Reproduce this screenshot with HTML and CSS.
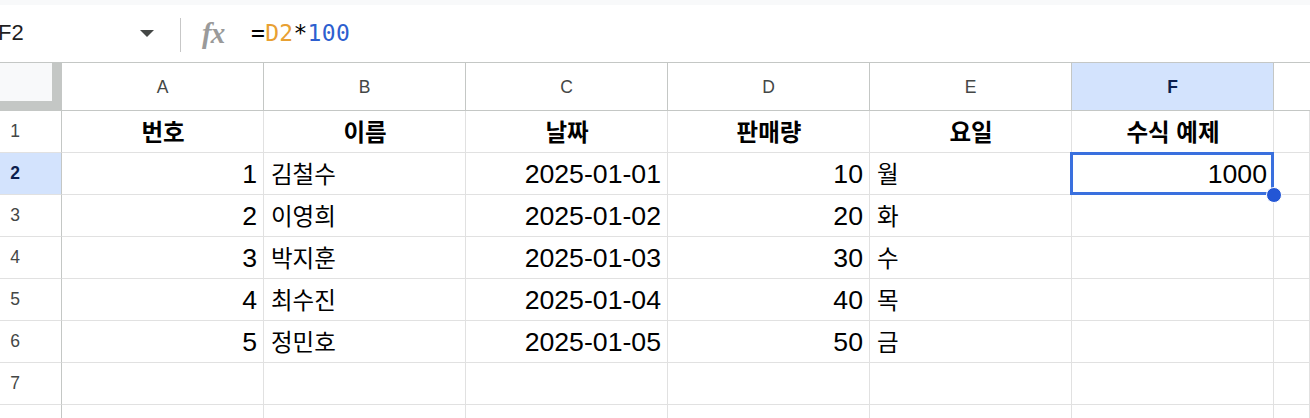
FILE: index.html
```html
<!DOCTYPE html>
<html lang="ko">
<head>
<meta charset="utf-8">
<title>Sheet</title>
<link rel="stylesheet" href="styles.css">
</head>
<body>
<div class="topstrip"></div>
<div class="formulabar">
  <div class="namebox">F2</div>
  <span class="caret"></span>
  <span class="sep"></span>
  <span class="fx">fx</span>
  <div class="formula"><span class="eq">=</span><span class="ref">D2</span><span class="eq">*</span><span class="num">100</span></div>
</div>
<div class="sheet">
  <div class="corner"><div class="corner-in"></div></div>
  <div class="colh">A</div>
  <div class="colh">B</div>
  <div class="colh">C</div>
  <div class="colh">D</div>
  <div class="colh">E</div>
  <div class="colh sel">F</div>
  <div class="colh last"></div>

  <div class="rowh">1</div>
  <div class="cell ko b c">번호</div>
  <div class="cell ko b c">이름</div>
  <div class="cell ko b c">날짜</div>
  <div class="cell ko b c">판매량</div>
  <div class="cell ko b c">요일</div>
  <div class="cell ko b c">수식 예제</div>
  <div class="cell"></div>

  <div class="rowh sel">2</div>
  <div class="cell r">1</div>
  <div class="cell ko">김철수</div>
  <div class="cell r">2025-01-01</div>
  <div class="cell r">10</div>
  <div class="cell ko">월</div>
  <div class="cell r active">1000<span class="handle"></span></div>
  <div class="cell"></div>

  <div class="rowh">3</div>
  <div class="cell r">2</div>
  <div class="cell ko">이영희</div>
  <div class="cell r">2025-01-02</div>
  <div class="cell r">20</div>
  <div class="cell ko">화</div>
  <div class="cell"></div>
  <div class="cell"></div>

  <div class="rowh">4</div>
  <div class="cell r">3</div>
  <div class="cell ko">박지훈</div>
  <div class="cell r">2025-01-03</div>
  <div class="cell r">30</div>
  <div class="cell ko">수</div>
  <div class="cell"></div>
  <div class="cell"></div>

  <div class="rowh">5</div>
  <div class="cell r">4</div>
  <div class="cell ko">최수진</div>
  <div class="cell r">2025-01-04</div>
  <div class="cell r">40</div>
  <div class="cell ko">목</div>
  <div class="cell"></div>
  <div class="cell"></div>

  <div class="rowh">6</div>
  <div class="cell r">5</div>
  <div class="cell ko">정민호</div>
  <div class="cell r">2025-01-05</div>
  <div class="cell r">50</div>
  <div class="cell ko">금</div>
  <div class="cell"></div>
  <div class="cell"></div>

  <div class="rowh">7</div>
  <div class="cell"></div>
  <div class="cell"></div>
  <div class="cell"></div>
  <div class="cell"></div>
  <div class="cell"></div>
  <div class="cell"></div>
  <div class="cell"></div>

  <div class="rowh">8</div>
  <div class="cell"></div>
  <div class="cell"></div>
  <div class="cell"></div>
  <div class="cell"></div>
  <div class="cell"></div>
  <div class="cell"></div>
  <div class="cell"></div>
</div>
</body>
</html>
```
FILE: styles.css
```css
* { box-sizing: border-box; }
html, body {
  margin: 0;
  padding: 0;
  background: #ffffff;
  width: 1310px;
  height: 418px;
  overflow: hidden;
  font-family: "Liberation Sans", Arial, "Noto Sans CJK KR", sans-serif;
  color: #000;
}
.topstrip {
  height: 5px;
  background: #f8f9fa;
}
.formulabar {
  height: 58px;
  display: flex;
  align-items: center;
  border-bottom: 1px solid #c4c7c5;
  padding-bottom: 2px;
}
.namebox {
  width: 142px;
  margin-left: -2px;
  font-size: 22px;
  line-height: 24px;
  color: #1f1f1f;
}
.caret {
  width: 0;
  height: 0;
  border-left: 7px solid transparent;
  border-right: 7px solid transparent;
  border-top: 7px solid #444746;
  margin-top: 2px;
}
.sep {
  width: 1px;
  height: 34px;
  background: #c7c7c7;
  margin-left: 26px;
  margin-top: 4px;
}
.fx {
  margin-left: 21px;
  font-family: "Liberation Serif", "DejaVu Serif", serif;
  font-style: italic;
  font-size: 29px;
  font-weight: bold;
  color: #9a9a9a;
  line-height: 30px;
  letter-spacing: -1px;
  width: 30px;
}
.formula {
  margin-left: 19px;
  font-family: "DejaVu Sans Mono", monospace;
  font-size: 23px;
  letter-spacing: 0.3px;
  line-height: 26px;
}
.formula .eq { color: #000; }
.formula .ref { color: #e8a032; }
.formula .num { color: #2d5fcf; }

.sheet {
  display: grid;
  grid-template-columns: 62px repeat(6, 202px) 1fr;
  grid-template-rows: 48px;
  grid-auto-rows: 42px;
}
.corner {
  background: #c4c7c5;
}
.corner-in {
  width: 52px;
  height: 38px;
  background: #f8f9fa;
}
.colh {
  border-right: 1px solid #c4c7c5;
  border-bottom: 1px solid #c4c7c5;
  text-align: center;
  font-size: 17.5px;
  line-height: 47px;
  padding-top: 1px;
  color: #444746;
}
.colh.last { border-right: none; }
.colh.sel {
  background: #d3e3fd;
  color: #0b1e4d;
  font-weight: bold;
}
.rowh {
  border-right: 1px solid #c4c7c5;
  border-bottom: 1px solid #e1e1e1;
  padding-right: 31px;
  text-align: center;
  font-size: 17.5px;
  line-height: 41px;
  color: #444746;
}
.rowh.sel {
  background: #d3e3fd;
  color: #0b1e4d;
  font-weight: bold;
}
.cell {
  position: relative;
  border-right: 1px solid #e1e1e1;
  border-bottom: 1px solid #e1e1e1;
  font-size: 26.67px;
  line-height: 41px;
  padding: 1px 6px 0 7px;
  white-space: nowrap;
}
.cell.ko {
  font-family: "Noto Sans CJK KR", sans-serif;
  font-size: 23.5px;
  padding-top: 0;
}
.cell.b { font-weight: bold; }
.cell.c { text-align: center; }
.cell.r { text-align: right; }
.cell.active::after {
  content: "";
  position: absolute;
  left: -2px;
  top: -1px;
  right: -1px;
  bottom: -1px;
  border: 3px solid #3a70de;
}
.handle {
  position: absolute;
  right: -9px;
  bottom: -9px;
  width: 16px;
  height: 16px;
  border-radius: 50%;
  background: #2356d5;
  border: 1px solid #ffffff;
  z-index: 2;
}
```
